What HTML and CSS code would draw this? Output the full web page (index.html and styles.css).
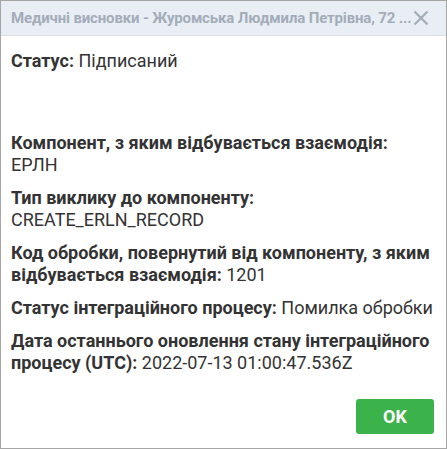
FILE: index.html
```html
<!DOCTYPE html>
<html lang="uk">
<head>
<meta charset="utf-8">
<link rel="stylesheet" href="styles.css">
</head>
<body>
<div class="dialog">
  <div class="header">
    <div class="title">Медичні висновки - Журомська Людмила Петрівна, 72 ...</div>
    <svg class="close" width="16" height="16" viewBox="0 0 16 16"><path d="M1.5 1.5L14.5 14.5M14.5 1.5L1.5 14.5" stroke="#a3acb9" stroke-width="2.2" fill="none"/></svg>
  </div>
  <div class="body">
    <p class="row first"><b>Статус:</b> Підписаний</p>
    <p class="row"><b>Компонент, з яким відбувається взаємодія:</b><br>ЕРЛН</p>
    <p class="row"><b>Тип виклику до компоненту:</b><br>CREATE_ERLN_RECORD</p>
    <p class="row"><b>Код обробки, повернутий від компоненту, з яким відбувається взаємодія:</b> 1201</p>
    <p class="row"><b>Статус інтеграційного процесу:</b> Помилка обробки</p>
    <p class="row"><b>Дата останнього оновлення стану інтеграційного процесу (UTC):</b> 2022-07-13 01:00:47.536Z</p>
  </div>
  <div class="footer">
    <button class="ok">OK</button>
  </div>
</div>
</body>
</html>
```
FILE: styles.css
```css
html, body {
  margin: 0;
  padding: 0;
  background: #fff;
}
.dialog {
  width: 447px;
  height: 449px;
  box-sizing: border-box;
  border: 1px solid #a6a6a6;
  display: flex;
  flex-direction: column;
  font-family: Roboto, "Liberation Sans", sans-serif;
  color: #333;
}
.header {
  height: 35px;
  box-sizing: border-box;
  background: #e9eef4;
  border-bottom: 1px solid #d8dfe8;
  display: flex;
  align-items: center;
  padding: 0 17px 0 10px;
}
.title {
  flex: 1;
  font-size: 15px;
  font-weight: 700;
  letter-spacing: -0.15px;
  color: #a3acb9;
  white-space: nowrap;
  overflow: hidden;
}
.close {
  flex: none;
}
.body {
  flex: 1;
  padding: 14px 10px 0 10px;
}
.row {
  margin: 0 0 11px 0;
  font-size: 18px;
  line-height: 22px;
}
.row.first {
  margin-bottom: 60px;
}
.row b {
  font-weight: 700;
}
.footer {
  display: flex;
  justify-content: flex-end;
  padding: 0 12px 14px 0;
}
.ok {
  width: 78px;
  height: 35px;
  border: none;
  border-radius: 3px;
  background: #3bb34a;
  color: #fff;
  font-family: Roboto, "Liberation Sans", sans-serif;
  font-size: 18px;
  font-weight: 700;
}
```
